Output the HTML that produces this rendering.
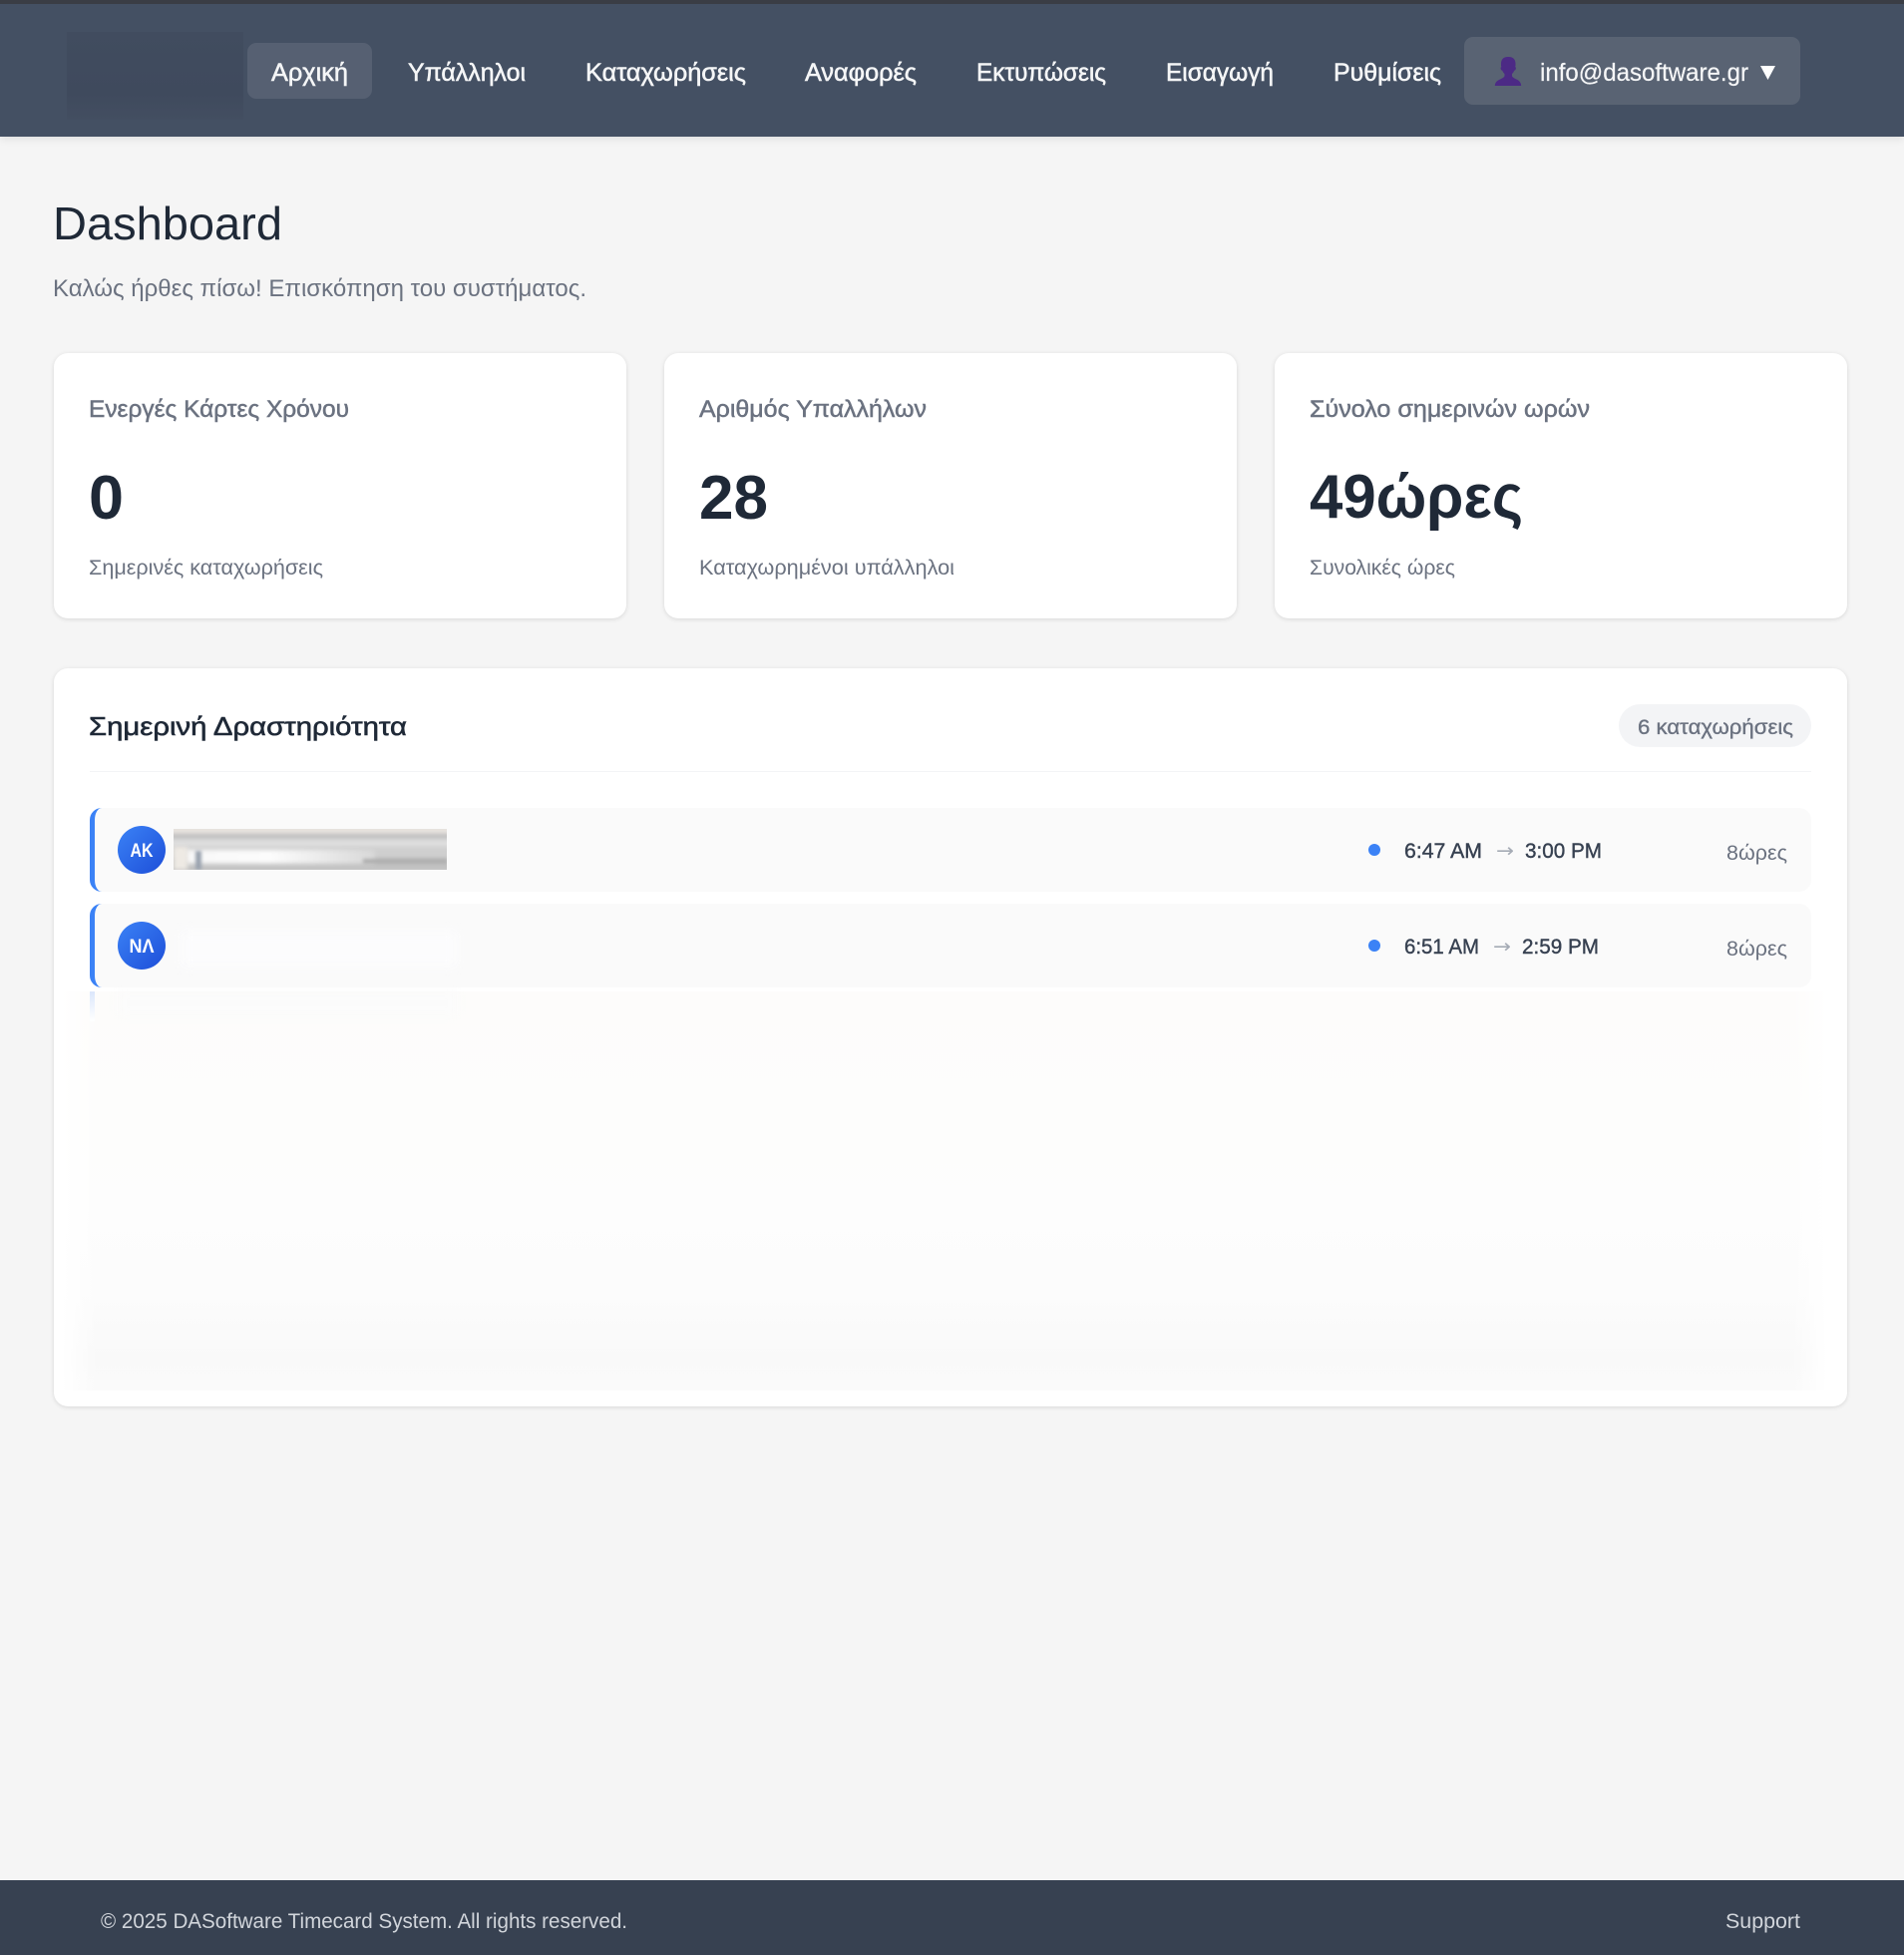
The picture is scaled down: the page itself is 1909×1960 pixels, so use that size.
<!DOCTYPE html>
<html lang="el">
<head>
<meta charset="utf-8">
<title>Dashboard</title>
<style>
html,body{margin:0;padding:0;width:1909px;height:1960px;overflow:hidden;background:#f5f5f5;font-family:"Liberation Sans",sans-serif}
.b{position:absolute;box-sizing:border-box}
.card{background:#fff;border-radius:14px;box-shadow:0 1px 5px rgba(0,0,0,.12)}
.row{background:#fafafa;border-left:5px solid #3b82f6;border-radius:12px;left:90px;width:1726px;height:84px}
.av{left:118px;width:48px;height:48px;border-radius:50%;background:linear-gradient(135deg,#3b82f6,#1d4ed8)}
.dot{left:1372px;width:12px;height:12px;border-radius:50%;background:#3b82f6}
svg.t{position:absolute;left:0;top:0}
svg.t text{font-family:"Liberation Sans",sans-serif}
.nav{fill:#f5f6f7;font-size:25px;stroke:#f5f6f7;stroke-width:.55px}
.ct{fill:#6b7280;font-size:24px;stroke:#6b7280;stroke-width:.5px}
.val{fill:#1f2937;font-size:62px;font-weight:bold}
.sub{fill:#6b7280;font-size:21px}
.tm{fill:#374151;font-size:21px;stroke:#374151;stroke-width:.4px}
svg.t text.ar{fill:#a5abb5;font-size:19px;font-family:"DejaVu Sans",sans-serif}
.ft{fill:#d1d5db;font-size:21px}
</style>
</head>
<body>
<div class="b" style="left:0;top:0;width:1909px;height:137px;background:#445063;box-shadow:0 2px 8px rgba(0,0,0,.1)"></div>
<div class="b" style="left:0;top:0;width:1909px;height:4px;background:#3a3d45"></div>
<div class="b" style="left:67px;top:32px;width:177px;height:88px;background:linear-gradient(180deg,#414c5f 0%,#3f4a5d 70%,#434e61 100%)"></div>
<div class="b" style="left:248px;top:43px;width:125px;height:56px;background:#566072;border-radius:9px"></div>
<div class="b" style="left:1468px;top:37px;width:337px;height:68px;background:#596373;border-radius:9px"></div>
<svg class="b" style="left:1496px;top:56px" width="32" height="32" viewBox="0 0 32 32">
<path fill="#4c2a85" d="M16 1c-5 0-7 3-7 7 0 1-.1 2.300.4 3-.8.300-1 1.300-.6 2.400.3.800.8 1.300 1.500 1.300.5 1.400 1.300 2.500 2.200 3.300v2c0 1.500-2.500 2.500-5.500 4C4 25.500 3 27.500 2.800 30h26.400c-.2-2.500-1.200-4.500-3.700-6-3-1.500-5.500-2.500-5.500-4v-2c.9-.800 1.700-1.900 2.200-3.300.7 0 1.200-.5 1.500-1.300.4-1.100.2-2.100-.6-2.400.5-.7.400-2 .4-3 0-4-2-7-7-7z"/>
</svg>

<div class="b card" style="left:54px;top:354px;width:574px;height:266px"></div>
<div class="b card" style="left:666px;top:354px;width:574px;height:266px"></div>
<div class="b card" style="left:1278px;top:354px;width:574px;height:266px"></div>

<div class="b card" style="left:54px;top:670px;width:1798px;height:740px"></div>
<div class="b" style="left:90px;top:773px;width:1726px;height:1px;background:#f3f4f6"></div>
<div class="b" style="left:1623px;top:706px;width:193px;height:43px;border-radius:22px;background:#f3f4f6"></div>

<div class="b row" style="top:810px"></div>
<div class="b row" style="top:906px"></div>
<div class="b av" style="top:828px"></div>
<div class="b av" style="top:924px"></div>
<div class="b" style="left:174px;top:831px;width:274px;height:41px;overflow:hidden;background:#cfcfcf">
  <div class="b" style="left:-6px;top:-6px;width:290px;height:53px;filter:blur(1.500px);background:linear-gradient(180deg,#e8e2dc 0,#e6e2de 18%,#bcbcbc 24%,#cfcfcf 30%,#e2e2e2 38%,#d0d0d0 48%,#cfcfcf 62%,#c0c0c0 72%,#c8c8c8 100%)"></div>
  <div class="b" style="left:12px;top:21px;width:190px;height:14px;filter:blur(2.500px);background:linear-gradient(90deg,#f8f8f8,#fcfcfc 45%,#d8d8d8 100%)"></div>
  <div class="b" style="left:0;top:18px;width:14px;height:23px;filter:blur(2px);background:#eeeae4"></div>
  <div class="b" style="left:22px;top:22px;width:6px;height:19px;filter:blur(1.500px);background:#9aa3af"></div>
  <div class="b" style="left:190px;top:30px;width:84px;height:5px;filter:blur(1.500px);background:#b0b0b0"></div>
</div>
<div class="b" style="left:180px;top:932px;width:280px;height:38px;filter:blur(6px);background:#fcfcfd"></div>

<div class="b dot" style="top:846px"></div>
<div class="b dot" style="top:942px"></div>

<div class="b" style="left:62px;top:994px;width:1770px;height:400px;background:linear-gradient(180deg,#fdfcfb 0%,#fdfdfc 30%,#fdfdfd 55%,#fcfcfc 75%,#f9f9f9 92%,#fafafa 100%)"></div>
<div class="b" style="left:62px;top:994px;width:36px;height:400px;background:linear-gradient(90deg,#fff,rgba(255,255,255,0))"></div>
<div class="b" style="left:1796px;top:994px;width:36px;height:400px;background:linear-gradient(270deg,#fff,rgba(255,255,255,0))"></div>
<div class="b" style="left:90px;top:994px;width:5px;height:30px;background:linear-gradient(180deg,#dbe6fb,#fff)"></div>
<div class="b" style="left:118px;top:994px;width:340px;height:24px;filter:blur(5px);background:#fbfbfb"></div>

<div class="b" style="left:0;top:1885px;width:1909px;height:75px;background:#374151"></div>

<svg class="t" width="1909" height="1960" viewBox="0 0 1909 1960">
<text class="nav" x="272" y="81" textLength="77" lengthAdjust="spacingAndGlyphs">Αρχική</text>
<text class="nav" x="409" y="81" textLength="118" lengthAdjust="spacingAndGlyphs">Υπάλληλοι</text>
<text class="nav" x="587" y="81" textLength="161" lengthAdjust="spacingAndGlyphs">Καταχωρήσεις</text>
<text class="nav" x="807" y="81" textLength="112" lengthAdjust="spacingAndGlyphs">Αναφορές</text>
<text class="nav" x="979" y="81" textLength="130" lengthAdjust="spacingAndGlyphs">Εκτυπώσεις</text>
<text class="nav" x="1169" y="81" textLength="108" lengthAdjust="spacingAndGlyphs">Εισαγωγή</text>
<text class="nav" x="1337" y="81" textLength="108" lengthAdjust="spacingAndGlyphs">Ρυθμίσεις</text>
<text x="1544" y="81" font-size="25" fill="#f5f6f7" stroke="#f5f6f7" stroke-width=".2" textLength="209" lengthAdjust="spacingAndGlyphs">info@dasoftware.gr</text>
<polygon points="1765,66 1780,66 1772.500,80" fill="#ffffff"/>

<text x="53" y="240" font-size="46" fill="#1f2937" textLength="230" lengthAdjust="spacingAndGlyphs">Dashboard</text>
<text x="53" y="297" font-size="24" fill="#6b7280" textLength="535" lengthAdjust="spacingAndGlyphs">Καλώς ήρθες πίσω! Επισκόπηση του συστήματος.</text>

<text class="ct" x="89" y="418" textLength="261" lengthAdjust="spacingAndGlyphs">Ενεργές Κάρτες Χρόνου</text>
<text class="val" x="89" y="520" textLength="35" lengthAdjust="spacingAndGlyphs">0</text>
<text class="sub" x="89" y="576" textLength="235" lengthAdjust="spacingAndGlyphs">Σημερινές καταχωρήσεις</text>

<text class="ct" x="701" y="418" textLength="228" lengthAdjust="spacingAndGlyphs">Αριθμός Υπαλλήλων</text>
<text class="val" x="701" y="520" textLength="69" lengthAdjust="spacingAndGlyphs">28</text>
<text class="sub" x="701" y="576" textLength="256" lengthAdjust="spacingAndGlyphs">Καταχωρημένοι υπάλληλοι</text>

<text class="ct" x="1313" y="418" textLength="281" lengthAdjust="spacingAndGlyphs">Σύνολο σημερινών ωρών</text>
<text class="val" x="1313" y="519" textLength="214" lengthAdjust="spacingAndGlyphs">49ώρες</text>
<text class="sub" x="1313" y="576" textLength="146" lengthAdjust="spacingAndGlyphs">Συνολικές ώρες</text>

<text x="89" y="737" font-size="26" fill="#1f2937" stroke="#1f2937" stroke-width=".6" textLength="319" lengthAdjust="spacingAndGlyphs">Σημερινή Δραστηριότητα</text>
<text x="1642" y="736" font-size="21" fill="#6b7280" stroke="#6b7280" stroke-width=".35" textLength="156" lengthAdjust="spacingAndGlyphs">6 καταχωρήσεις</text>

<text x="130.500" y="859" font-size="19" font-weight="bold" fill="#fff" textLength="23" lengthAdjust="spacingAndGlyphs">ΑΚ</text>
<text x="129.500" y="955" font-size="19" font-weight="bold" fill="#fff" textLength="25" lengthAdjust="spacingAndGlyphs">ΝΛ</text>

<text class="tm" x="1408" y="860" textLength="78" lengthAdjust="spacingAndGlyphs">6:47 AM</text>
<text class="ar" x="1500" y="859" textLength="18" lengthAdjust="spacingAndGlyphs">→</text>
<text class="tm" x="1529" y="860" textLength="77" lengthAdjust="spacingAndGlyphs">3:00 PM</text>
<text class="sub" x="1731" y="862" textLength="61" lengthAdjust="spacingAndGlyphs">8ώρες</text>

<text class="tm" x="1408" y="956" textLength="75" lengthAdjust="spacingAndGlyphs">6:51 AM</text>
<text class="ar" x="1497" y="955" textLength="18" lengthAdjust="spacingAndGlyphs">→</text>
<text class="tm" x="1526" y="956" textLength="77" lengthAdjust="spacingAndGlyphs">2:59 PM</text>
<text class="sub" x="1731" y="958" textLength="61" lengthAdjust="spacingAndGlyphs">8ώρες</text>

<text class="ft" x="101" y="1933" textLength="528" lengthAdjust="spacingAndGlyphs">© 2025 DASoftware Timecard System. All rights reserved.</text>
<text class="ft" x="1730" y="1933" textLength="75" lengthAdjust="spacingAndGlyphs">Support</text>
</svg>
</body>
</html>
